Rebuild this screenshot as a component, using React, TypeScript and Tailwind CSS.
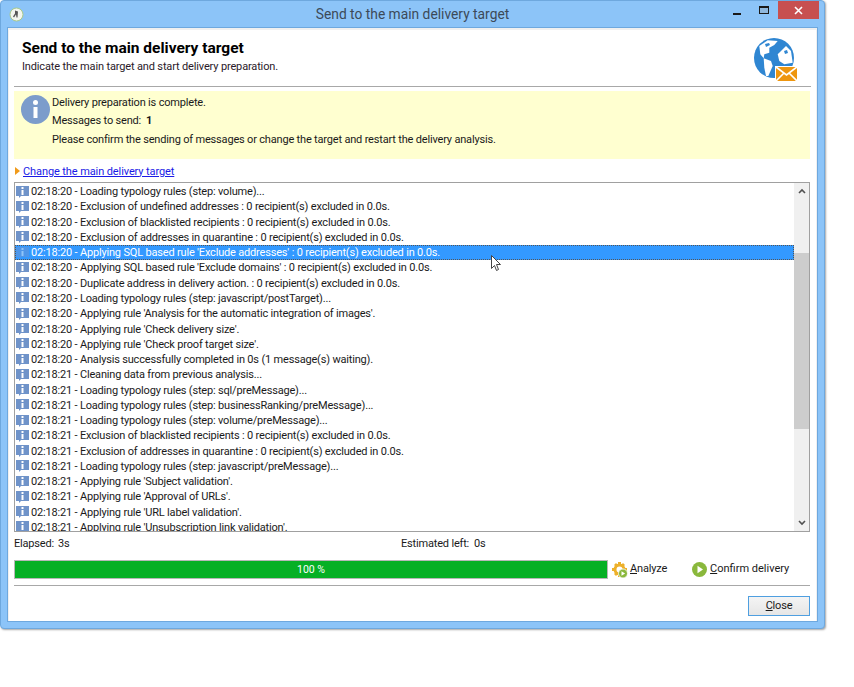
const F = "font-['Roboto','Liberation_Sans',sans-serif]";

const rows: [string, string][] = [
  ["02:18:20", "Loading typology rules (step: volume)..."],
  ["02:18:20", "Exclusion of undefined addresses : 0 recipient(s) excluded in 0.0s."],
  ["02:18:20", "Exclusion of blacklisted recipients : 0 recipient(s) excluded in 0.0s."],
  ["02:18:20", "Exclusion of addresses in quarantine : 0 recipient(s) excluded in 0.0s."],
  ["02:18:20", "Applying SQL based rule 'Exclude addresses' : 0 recipient(s) excluded in 0.0s."],
  ["02:18:20", "Applying SQL based rule 'Exclude domains' : 0 recipient(s) excluded in 0.0s."],
  ["02:18:20", "Duplicate address in delivery action. : 0 recipient(s) excluded in 0.0s."],
  ["02:18:20", "Loading typology rules (step: javascript/postTarget)..."],
  ["02:18:20", "Applying rule 'Analysis for the automatic integration of images'."],
  ["02:18:20", "Applying rule 'Check delivery size'."],
  ["02:18:20", "Applying rule 'Check proof target size'."],
  ["02:18:20", "Analysis successfully completed in 0s (1 message(s) waiting)."],
  ["02:18:21", "Cleaning data from previous analysis..."],
  ["02:18:21", "Loading typology rules (step: sql/preMessage)..."],
  ["02:18:21", "Loading typology rules (step: businessRanking/preMessage)..."],
  ["02:18:21", "Loading typology rules (step: volume/preMessage)..."],
  ["02:18:21", "Exclusion of blacklisted recipients : 0 recipient(s) excluded in 0.0s."],
  ["02:18:21", "Exclusion of addresses in quarantine : 0 recipient(s) excluded in 0.0s."],
  ["02:18:21", "Loading typology rules (step: javascript/preMessage)..."],
  ["02:18:21", "Applying rule 'Subject validation'."],
  ["02:18:21", "Applying rule 'Approval of URLs'."],
  ["02:18:21", "Applying rule 'URL label validation'."],
  ["02:18:21", "Applying rule 'Unsubscription link validation'."],
];

function RowIcon({ selected }: { selected: boolean }) {
  return (
    <svg width="15" height="14" viewBox="0 0 15 14" className="shrink-0">
      <path d="M1 1h13v10H6l-2 2v-2H1z" fill={selected ? "#4f96e8" : "#6f93c9"} />
      <rect x="6.5" y="2" width="2" height="2" fill={selected ? "#8fc4f8" : "#fff"} />
      <rect x="6.5" y="5" width="2" height="5" fill={selected ? "#8fc4f8" : "#fff"} />
    </svg>
  );
}

function Globe() {
  return (
    <svg width="44" height="44" viewBox="0 0 44 44">
      <circle cx="21" cy="21" r="20" fill="#2f86d2" />
      <path d="M6.300 9L14.700 3.300 24.700 4 21.300 8 16.300 10.700 16.300 15.700 11.300 17.300 10.700 21.300 7.300 17.300z" fill="#fff" />
      <path d="M10.700 21.300L18 24 19.700 29 15.300 39 13 39 11.300 30.700z" fill="#fff" />
      <path d="M28 14L33 9 38 14 39.700 25.700 31.300 27.300 26.300 24 24.700 17.300z" fill="#fff" />
      <path d="M12 7l4-1 1 2-4 2zM31 14l3-1 1 3-3 1zM22 9l6-2 4 1-5 3z" fill="#2f86d2" />
      <rect x="22" y="29" width="22" height="15" fill="#fff" />
      <rect x="23" y="30" width="21" height="14" fill="#ee960f" />
      <path d="M23 30l10.500 8L44 30M23 44l8-8M44 44l-8-8" fill="none" stroke="#fff" strokeWidth="1.600" />
    </svg>
  );
}

function Gear() {
  return (
    <svg width="16" height="16" viewBox="0 0 16 16">
      <circle cx="7.500" cy="7.500" r="4.500" fill="none" stroke="#edb02a" strokeWidth="3" />
      <path d="M6 0h3v3H6zM6 12h3v3H6zM0 6h3v3H0zM12 6h3v3h-3zM2 3l2-2 2 2-2 2zM11 1l2 2-2 2-2-2zM2 12l2-2 2 2-2 2z" fill="#edb02a" />
      <circle cx="11" cy="11.500" r="4.500" fill="#8ab83c" stroke="#fff" strokeWidth=".8" />
      <path d="M9.500 9.200l3.600 2.300-3.600 2.300z" fill="#fff" />
    </svg>
  );
}

export default function App() {
  return (
    <div className={`${F} w-[854px] h-[687px] bg-white text-[11px] leading-[15px] text-[#1a1a1a] tracking-[-0.18px]`}>
      <div className="w-[825px] h-[629px] bg-[#8cc4f8] rounded-[4px] border border-[#6ea8de] flex flex-col shadow-[1px_1px_2px_rgba(0,0,0,0.35)]">
        <div className="h-[26px] shrink-0 flex items-start">
          <div className="w-[30px] h-[26px] flex items-center justify-center">
            <svg width="15" height="15" viewBox="0 0 15 15">
              <circle cx="7.500" cy="7.500" r="6.500" fill="#f3f6ee" stroke="#a9c98b" />
              <path d="M6 3.500l3 1-.5 6h-1l-.5-3-2 3-1-1 2-3z" fill="#555" />
            </svg>
          </div>
          <div className="flex-1 text-center text-[13.800px] leading-[26px] text-[#3c4a58] pl-[70px] tracking-normal">Send to the main delivery target</div>
          <div className="flex items-start">
            <div className="w-[26px] h-[18px] flex items-end justify-center pb-[4px]">
              <div className="w-[8px] h-[2px] bg-[#1a1a1a]" />
            </div>
            <div className="w-[28px] h-[18px] flex items-start justify-center pt-[5px]">
              <div className="w-[10px] h-[8px] border border-[#1a1a1a] border-t-2 bg-[#8fb8de]" />
            </div>
            <div className="w-[41px] h-[18px] bg-[#c75050] flex items-center justify-center text-white mr-[5px]">
              <svg width="9" height="9" viewBox="0 0 9 9"><path d="M1 1l7 7M8 1l-7 7" stroke="#fff" strokeWidth="1.600" /></svg>
            </div>
          </div>
        </div>

        <div className="mx-[6px] mb-[6px] flex-1 bg-white border border-[#6ea8de] flex flex-col min-h-0 shadow-[inset_0_1px_0_1px_#f0f0f0]">
          <div className="h-[59px] shrink-0 mx-[6px] border-b border-[#a8a8a8] flex justify-between">
            <div className="pl-[8px] pt-[11px]">
              <div className="text-[15.500px] leading-[18px] font-bold text-black tracking-normal">Send to the main delivery target</div>
              <div className="text-[11px] leading-[15px] mt-[2px] text-[#2a1a2a] tracking-[-0.15px]">Indicate the main target and start delivery preparation.</div>
            </div>
            <div className="pr-[14px] pt-[9px]"><Globe /></div>
          </div>

          <div className="h-[68px] shrink-0 ml-[6px] mr-[7px] mt-[4px] bg-[#ffffd0] flex">
            <div className="pl-[7px] pt-[4px] shrink-0">
              <svg width="29" height="29" viewBox="0 0 29 29">
                <circle cx="14.500" cy="14.500" r="14.500" fill="#7c9ccb" />
                <circle cx="14.500" cy="7.500" r="2.500" fill="#fff" />
                <rect x="12.500" y="12" width="4" height="11" fill="#fff" />
              </svg>
            </div>
            <div className="pl-[2px] pt-[4px]">
              <div className="h-[18px] leading-[16px]">Delivery preparation is complete.</div>
              <div className="h-[18px] flex leading-[16px]">
                <span>Messages to send:</span>
                <span className="ml-[5px] font-bold">1</span>
              </div>
              <div className="mt-[1px] leading-[16px]">Please confirm the sending of messages or change the target and restart the delivery analysis.</div>
            </div>
          </div>

          <div className="h-[23px] shrink-0 ml-[7px] flex items-center gap-[3px] pt-[1px]">
            <svg width="5" height="8" viewBox="0 0 5 8"><path d="M0 0l5 4-5 4z" fill="#f09a1a" /></svg>
            <a className="text-[#1a1ae6] underline tracking-[-0.1px]">Change the main delivery target</a>
          </div>

          <div className="h-[350px] shrink-0 ml-[6px] mr-[7px] border border-[#a0a0a0] flex overflow-hidden">
            <div className="flex-1 min-w-0 overflow-hidden pt-[1px]">
              {rows.map(([t, m], i) => {
                const sel = i === 4;
                return (
                  <div
                    key={i}
                    className={`h-[15.270px] flex items-center whitespace-nowrap ${sel ? "bg-[#3399ff] text-white outline-1 -outline-offset-1 outline-dotted outline-[#555]" : ""}`}
                  >
                    <RowIcon selected={sel} />
                    <span className="ml-[1px]">{t} - {m}</span>
                  </div>
                );
              })}
            </div>
            <div className="w-[15px] shrink-0 bg-[#f0f0f0] flex flex-col">
              <div className="h-[16px] flex items-center justify-center">
                <svg width="8" height="6" viewBox="0 0 8 6"><path d="M1 5l3-3 3 3" fill="none" stroke="#505050" strokeWidth="1.600" /></svg>
              </div>
              <div className="h-[54px]" />
              <div className="h-[176px] bg-[#cdcdcd]" />
              <div className="flex-1" />
              <div className="h-[16px] flex items-center justify-center">
                <svg width="8" height="6" viewBox="0 0 8 6"><path d="M1 1l3 3 3-3" fill="none" stroke="#505050" strokeWidth="1.600" /></svg>
              </div>
            </div>
          </div>

          <div className="h-[22px] shrink-0 ml-[6px] flex items-center whitespace-nowrap">
            <span className="w-[44px] shrink-0">Elapsed:</span>
            <span className="w-[343px] shrink-0">3s</span>
            <span className="w-[73px] shrink-0">Estimated left:</span>
            <span>0s</span>
          </div>

          <div className="shrink-0 ml-[6px] mr-[7px] mt-[6px] h-[19px] flex items-center whitespace-nowrap">
            <div className="w-[594px] h-[19px] border border-[#b8b8b8] bg-[#06b025] text-white text-center leading-[17px] text-[10.500px] tracking-normal">100 %</div>
            <div className="ml-[4px] w-[16px] h-[16px]"><Gear /></div>
            <span className="ml-[2px] mb-[2px]"><u>A</u>nalyze</span>
            <svg className="ml-[25px]" width="15" height="15" viewBox="0 0 15 15">
              <circle cx="7.500" cy="7.500" r="7.500" fill="#8ab83c" />
              <path d="M5.500 3.800l5.500 3.700-5.500 3.700z" fill="#fff" />
            </svg>
            <span className="ml-[3px] mb-[2px] tracking-normal"><u>C</u>onfirm delivery</span>
          </div>

          <div className="h-[1px] shrink-0 bg-[#a8a8a8] ml-[6px] mr-[7px] mt-[6px]" />

          <div className="shrink-0 mr-[7px] mt-[10px] flex justify-end">
            <button className={`${F} w-[62px] h-[20px] border border-[#4f9fe0] bg-gradient-to-b from-[#f4f4f4] to-[#e6e6e6] text-[11px] leading-[16px] text-[#1a1a1a]`}>
              <u>C</u>lose
            </button>
          </div>
        </div>
      </div>

      <div className="absolute left-[491px] top-[255px]">
        <svg width="12" height="17" viewBox="0 0 12 17">
          <path d="M0.500 0.500v13l3-3 2 5 2-1-2-5h4z" fill="#fff" stroke="#444" strokeWidth="1" />
        </svg>
      </div>
    </div>
  );
}
